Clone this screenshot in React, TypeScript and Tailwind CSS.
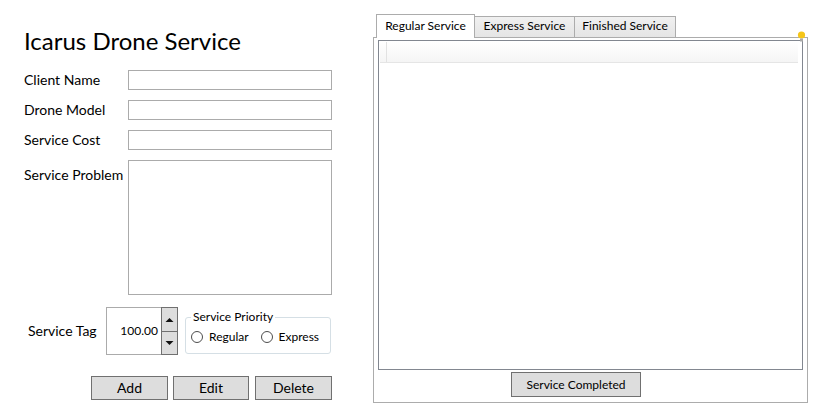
import React from "react";

const font = { fontFamily: 'Lato, "Open Sans", sans-serif' };

function Label({ children, className = "" }: { children: React.ReactNode; className?: string }) {
  return <div className={"text-[14px] leading-[20px] text-black " + className}>{children}</div>;
}

function Btn({ children, className = "", small = false }: { children: React.ReactNode; className?: string; small?: boolean }) {
  return (
    <div
      className={
        "bg-[#dddddd] border border-[#707070] flex items-center justify-center text-black " +
        (small ? "text-[12px] leading-[16px] h-[25px] " : "text-[14px] leading-[20px] h-[24px] ") +
        className
      }
    >
      {children}
    </div>
  );
}

function Radio({ label }: { label: string }) {
  return (
    <div className="flex items-center">
      <div className="w-[12px] h-[12px] rounded-full border border-[#4d4d4d] bg-white" />
      <span className="ml-[6px] text-[12px] leading-[16px] text-black">{label}</span>
    </div>
  );
}

export default function App() {
  return (
    <div className="w-[819px] h-[415px] bg-white flex relative overflow-hidden text-black" style={font}>
      {/* Left panel */}
      <div className="w-[373px] shrink-0 pl-[24px] flex flex-col">
        <div className="mt-[25px] text-[24px] leading-[32px] whitespace-nowrap">Icarus Drone Service</div>
        <div className="mt-[13px] grid grid-cols-[104px_204px] gap-y-[10px]">
          <Label className="self-center">Client Name</Label>
          <div className="h-[20px] border border-[#ababab]" />
          <Label className="self-center">Drone Model</Label>
          <div className="h-[20px] border border-[#ababab]" />
          <Label className="self-center">Service Cost</Label>
          <div className="h-[20px] border border-[#ababab]" />
          <Label className="mt-[5px] whitespace-nowrap">Service Problem</Label>
          <div className="h-[135px] border border-[#ababab]" />
        </div>
        <div className="mt-[12px] flex items-start">
          <div className="w-[82px] h-[48px] pl-[4px] flex items-center">
            <Label>Service Tag</Label>
          </div>
          <div className="w-[72px] h-[48px] border border-[#ababab] flex">
            <div className="flex-1 flex items-center justify-end pr-[3px] text-[12px] leading-[16px]">100.00</div>
            <div className="w-[17px] flex flex-col -my-[1px] -mr-[1px]">
              <div className="h-[25px] bg-[#dddddd] border border-[#707070] flex items-center justify-center">
                <svg width="9" height="6" viewBox="0 0 9 6">
                  <path d="M0.5 5 L4.5 1 L8.5 5 Z" fill="#111" />
                </svg>
              </div>
              <div className="h-[24px] -mt-[1px] bg-[#dddddd] border border-[#707070] flex items-center justify-center">
                <svg width="9" height="6" viewBox="0 0 9 6">
                  <path d="M0.5 1 L4.5 5 L8.5 1 Z" fill="#111" />
                </svg>
              </div>
            </div>
          </div>
          <div className="ml-[7px] mt-[10px] w-[146px] h-[37px] border border-[#d5dfe5] rounded-[3px] relative">
            <div className="absolute left-[5px] -top-[9px] px-[2px] bg-white text-[12px] leading-[16px] whitespace-nowrap">
              Service Priority
            </div>
            <div className="mt-[11px] ml-[5px] flex gap-[12px]">
              <Radio label="Regular" />
              <Radio label="Express" />
            </div>
          </div>
        </div>
        <div className="mt-[21px] ml-[67px] flex">
          <Btn className="w-[77px]">Add</Btn>
          <Btn className="w-[76px] ml-[5px]">Edit</Btn>
          <Btn className="w-[77px] ml-[6px]">Delete</Btn>
        </div>
      </div>

      {/* Right panel */}
      <div className="w-[435px] shrink-0 flex flex-col pt-[14px]">
        <div className="flex items-end pl-[3px] h-[24px] relative z-10">
          <div className="w-[99px] h-[24px] bg-white border border-[#acacac] border-b-0 flex items-center justify-center text-[12px] leading-[16px] pb-[2px]">
            Regular Service
          </div>
          <div className="w-[100px] h-[22px] bg-gradient-to-b from-[#f0f0f0] to-[#e5e5e5] border border-[#acacac] border-l-0 flex items-center justify-center text-[12px] leading-[16px] pb-[2px]">
            Express Service
          </div>
          <div className="w-[101px] h-[22px] bg-gradient-to-b from-[#f0f0f0] to-[#e5e5e5] border border-[#acacac] border-l-0 flex items-center justify-center text-[12px] leading-[16px] pb-[2px]">
            Finished Service
          </div>
        </div>
        <div className="-mt-[1px] w-[435px] h-[366px] border border-[#acacac] flex flex-col px-[4px] pt-[2px]">
          <div className="h-[330px] border border-[#828790] flex flex-col">
            <div className="mt-[1px] mx-[1px] mr-[4px] h-[21px] bg-gradient-to-b from-white to-[#f5f5f5] border-b border-[#e5e5e5] flex">
              <div className="w-[7px] border-r border-[#e2e2e2]" />
            </div>
          </div>
          <div className="mt-[2px] ml-[133px]">
            <Btn small className="w-[130px]">Service Completed</Btn>
          </div>
        </div>
      </div>

      {/* design-time adorner bulb */}
      <svg className="absolute left-[797px] top-[30px]" width="10" height="14" viewBox="0 0 10 14">
        <circle cx="4.5" cy="5" r="3.6" fill="#f5c518" />
        <rect x="3" y="8.5" width="3" height="3" fill="#a8a8a8" />
      </svg>
    </div>
  );
}
